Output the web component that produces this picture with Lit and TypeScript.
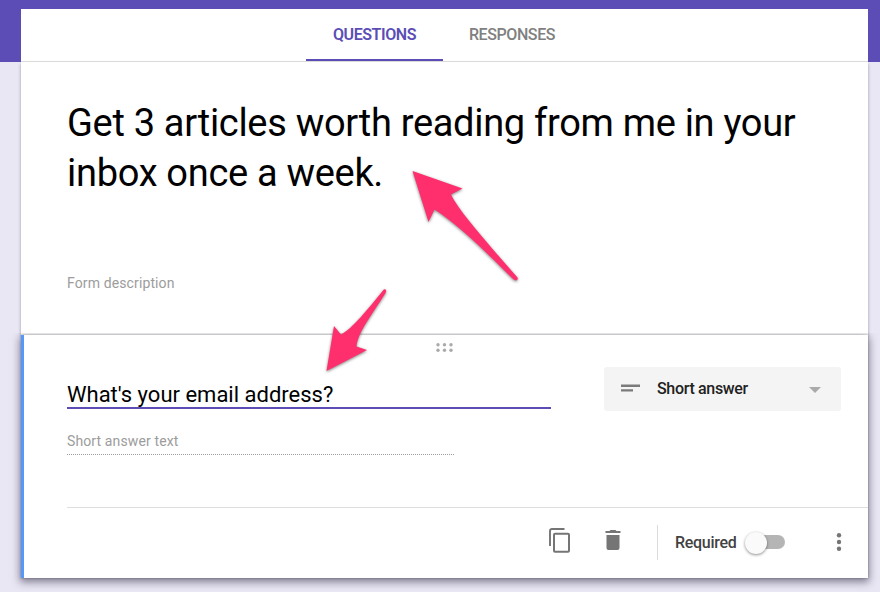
import { LitElement, html, css, svg } from "lit";
import { customElement, property } from "lit/decorators.js";

@customElement("form-tabs")
class FormTabs extends LitElement {
  static styles = css`
    :host { display: flex; height: 52px; padding-left: 285px; border-bottom: 1px solid #dfdfdf; background: #fff; box-sizing: content-box; }
    .tab { box-sizing: border-box; height: 52px; width: 138px; text-align: center; font: 500 16px/52px Roboto, "Liberation Sans", sans-serif; letter-spacing: -0.4px; color: #808080; white-space: nowrap; }
    .active { width: 137px; color: #5b4db5; border-bottom: 2px solid #5b4db5; font-weight: 600; letter-spacing: -0.42px; }
  `;
  render() {
    return html`<div class="tab active">QUESTIONS</div><div class="tab">RESPONSES</div>`;
  }
}

@customElement("type-select")
class TypeSelect extends LitElement {
  @property() label = "";
  static styles = css`
    :host { display: flex; align-items: center; box-sizing: border-box; width: 237px; height: 44px; padding: 0 20px 0 17px; border-radius: 3px; background: #f4f4f4; }
    span { flex: 1; margin-left: 17px; font: 500 16px/24px Roboto, "Liberation Sans", sans-serif; color: #212121; letter-spacing: -0.33px; }
    svg { display: block; }
    .lines { margin-top: -2px; }
    .caret { margin-top: 2px; }
  `;
  render() {
    return html`
      <svg class="lines" width="19" height="10" viewBox="0 0 19 10"><path d="M0 1.500h19v2.500H0zM0 6.200h12v2.400H0z" fill="#7b7b7b"/></svg>
      <span>${this.label}</span>
      <svg class="caret" width="12" height="6" viewBox="0 0 12 6"><path d="M0 0h12L6 6z" fill="#aaa"/></svg>`;
  }
}

@customElement("question-card")
class QuestionCard extends LitElement {
  static styles = css`
    :host { display: flex; flex-direction: column; box-sizing: border-box; height: 243px; border-left: 3px solid #5398fa; background: #fff; position: relative; font-family: Roboto, "Liberation Sans", sans-serif;
      box-shadow: 0 0 2px rgba(0,0,0,.3), 0 3px 8px 1px rgba(40,35,60,.55); clip-path: inset(-2px -14px -18px -14px); }
    svg { display: block; flex: none; }
    .grip { height: 32px; padding: 8px 0 0 412px; box-sizing: border-box; }
    .row { display: flex; justify-content: space-between; padding: 0 27px 0 43px; height: 44px; }
    .question { box-sizing: border-box; width: 484px; height: 42px; border-bottom: 2px solid #5b4db5; font-size: 22px; line-height: 56px; color: #000; white-space: nowrap; }
    .answer { box-sizing: border-box; margin: 14px 0 0 43px; width: 387px; height: 30px; border-bottom: 1px dotted #9b9b9b; font-size: 14px; letter-spacing: 0.12px; line-height: 32px; color: #9c9c9c; }
    .footer { display: flex; align-items: center; box-sizing: border-box; height: 71px; margin: auto 0 0 43px; padding-bottom: 1px; border-top: 1px solid #dedede; }
    .copy { margin-left: 482px; margin-top: -3px; }
    .trash { margin-left: 34px; margin-top: -5px; }
    .line { width: 1px; height: 35px; margin-left: 36px; background: #dcdcdc; }
    .required { width: 62px; margin-left: 17px; font-size: 16px; font-weight: 500; letter-spacing: -0.28px; color: #424242; white-space: nowrap; }
    .toggle { position: relative; width: 32px; height: 14px; margin: -2px 0 0 16px; border-radius: 7px; background: #b5b5b5; }
    .knob { position: absolute; left: -8px; top: -3px; width: 22px; height: 22px; border-radius: 50%; background: #fafafa; box-shadow: 0 1px 3px rgba(0,0,0,.45); }
    .more { margin: -2px 0 0 51px; }
  `;
  render() {
    const dots = [2, 8.5, 15].flatMap((x) => [1.7, 7.2].map((y) => svg`<circle cx=${x} cy=${y} r="1.7" fill="#aaa"/>`));
    return html`
      <div class="grip"><svg width="18" height="9" viewBox="0 0 18 9">${dots}</svg></div>
      <div class="row">
        <div class="question">What's your email address?</div>
        <type-select label="Short answer"></type-select>
      </div>
      <div class="answer">Short answer text</div>
      <div class="footer">
        <svg class="copy" width="22" height="26" viewBox="0 0 22 26"><path d="M1 18V3Q1 1 3 1H15.500" fill="none" stroke="#757575" stroke-width="1.900"/><rect x="5" y="5.800" width="15" height="18" rx="1" fill="none" stroke="#757575" stroke-width="2"/></svg>
        <svg class="trash" width="16" height="20" viewBox="0 0 16 20"><path d="M.5 1H4.500L5.500 0h5l1 1h4v2H.5zM1.500 5h13V18Q14.500 20 12.500 20H3.500Q1.500 20 1.500 18z" fill="#757575"/></svg>
        <div class="line"></div>
        <div class="required">Required</div>
        <div class="toggle"><div class="knob"></div></div>
        <svg class="more" width="6" height="18" viewBox="0 0 6 18"><g fill="#757575"><circle cx="3" cy="2.200" r="2.200"/><circle cx="3" cy="9" r="2.200"/><circle cx="3" cy="15.800" r="2.200"/></g></svg>
      </div>`;
  }
}

@customElement("app-root")
class AppRoot extends LitElement {
  static styles = css`
    :host { display: block; box-sizing: border-box; position: relative; width: 880px; height: 592px; padding: 9px 12px 0 21px; overflow: hidden;
      background: linear-gradient(#5b4db5 62px, #e9e7f4 62px); font-family: Roboto, "Liberation Sans", sans-serif; }
    .intro { box-sizing: border-box; height: 273px; padding: 36px 46px 0; background: #fff; box-shadow: 0 2px 3px rgba(40,35,60,.4); }
    .title { font-size: 38px; letter-spacing: -0.3px; line-height: 50px; color: #000; white-space: nowrap; }
    .description { margin-top: 75px; font-size: 14px; letter-spacing: 0.12px; line-height: 20px; color: #9c9c9c; }
    .arrows { position: absolute; left: 0; top: 0; filter: drop-shadow(0 1px 1.500px rgba(0,0,0,.5)); }
  `;
  render() {
    return html`
      <form-tabs></form-tabs>
      <div class="intro">
        <div class="title">Get 3 articles worth reading from me in your<br>inbox once a week.</div>
        <div class="description">Form description</div>
      </div>
      <question-card></question-card>
      <svg class="arrows" width="880" height="592" viewBox="0 0 880 592" fill="#ff2f6e">
        <path d="M412.500 171L462.500 188.500L451 194.500C458 210 490 246 517.500 277.500Q518.500 280 516 280.500Q514.500 280.500 510 276C482 248 456 223 434.500 209.500L428.500 222Z"/>
        <path d="M326.500 371L334 326L341 334.500C352 329 368 309 383 290.500Q384.500 288.500 386 290Q386.500 291 385.500 293C372 315 358 332 356.500 346.500L367 350Z"/>
      </svg>`;
  }
}
